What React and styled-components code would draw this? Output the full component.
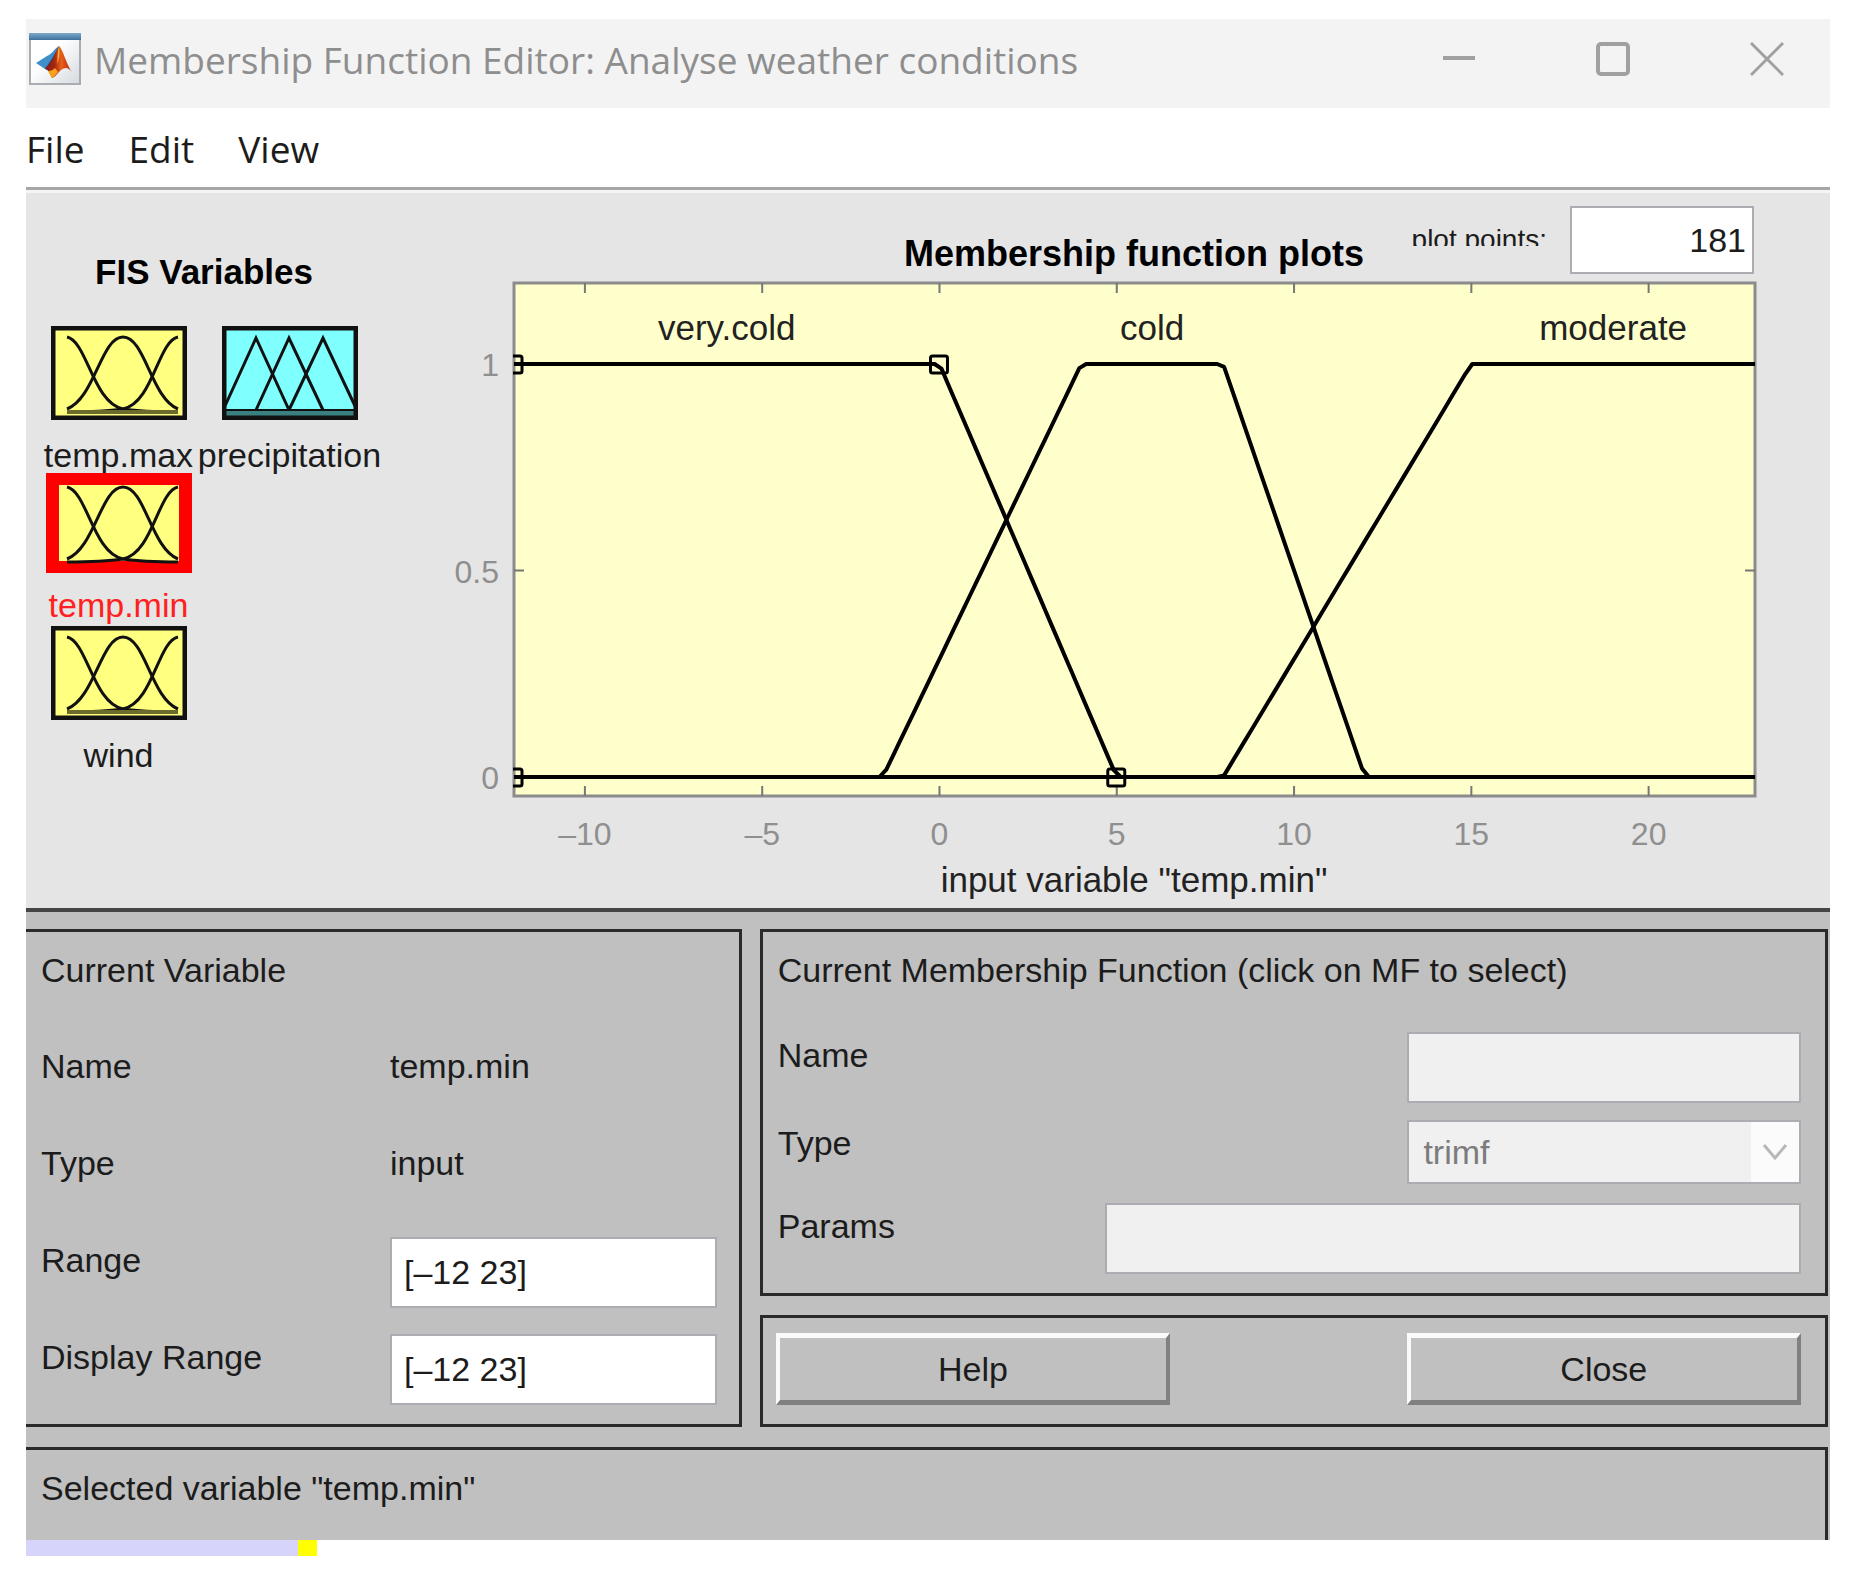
import React, { useState } from 'react'
import styled, { createGlobalStyle } from 'styled-components'

const variables = [
  { name: 'temp.max', kind: 'input' },
  { name: 'precipitation', kind: 'output' },
  { name: 'temp.min', kind: 'input' },
  { name: 'wind', kind: 'input', newRow: true },
]

const functions = [
  { name: 'very.cold', params: [-13, -12, 0, 5], labelAt: -6 },
  { name: 'cold', params: [-1.6, 4, 8, 12], labelAt: 6 },
  { name: 'moderate', params: [8, 15, 24, 25], labelAt: 19 },
]

const handles = [
  [-12, 1],
  [0, 1],
  [-12, 0],
  [5, 0],
]

const xTicks = [-10, -5, 0, 5, 10, 15, 20]
const yTicks = [0, 0.5, 1]

const plot = { left: 74, right: 1315, top: 3, bottom: 516 }
const xScale = (x) => plot.left + ((x + 12) / 35) * (plot.right - plot.left)
const yScale = (y) => 497 - y * 413
const formatTick = (n) => String(n).replace('-', '–')

const trapmf = (x, [a, b, c, d]) =>
  Math.max(0, Math.min((x - a) / (b - a), 1, (d - x) / (d - c)))

const curvePoints = (params, count) =>
  Array.from({ length: count }, (_, i) => {
    const x = -12 + (35 * i) / (count - 1)
    return `${xScale(x).toFixed(1)},${yScale(trapmf(x, params)).toFixed(1)}`
  }).join(' ')

const AppIcon = () => (
  <svg width='52' height='52' viewBox='0 0 52 52' aria-hidden='true'>
    <defs>
      <linearGradient id='paper' x1='0' y1='0' x2='1' y2='1'>
        <stop offset='0.4' stopColor='#ffffff' />
        <stop offset='1' stopColor='#d5d9de' />
      </linearGradient>
      <linearGradient id='bar' x1='0' y1='0' x2='0' y2='1'>
        <stop offset='0' stopColor='#7fa9c9' />
        <stop offset='1' stopColor='#3b709c' />
      </linearGradient>
      <linearGradient id='flame' x1='0' y1='0' x2='1' y2='0'>
        <stop offset='0' stopColor='#8c1a12' />
        <stop offset='0.35' stopColor='#a3260f' />
        <stop offset='0.6' stopColor='#e8601a' />
        <stop offset='1' stopColor='#b5250f' />
      </linearGradient>
    </defs>
    <rect x='1' y='1' width='50' height='50' fill='url(#paper)' stroke='#a9adb1' strokeWidth='2' />
    <rect x='0' y='0' width='52' height='7' fill='url(#bar)' />
    <path d='M7 30 L18 23 C22 22 26 15 30 13 L24 31 L16 36 Z' fill='#3f8fcb' />
    <path d='M16 36 L24 24 L30 13 L26 34 L20 38 Z' fill='#1f4379' />
    <path d='M16 35 C21 33 25 22 30 13 C34 16 37 31 43 39 C38 33 35 35 31 38 C28 41 26 44 23 45 C21 41 20 37 16 35 Z' fill='url(#flame)' />
    <path d='M19 38 C22 38 24 37 26 35 L29 39 C27 41 25 44 23 45 C21 42 20 40 19 38 Z' fill='#f6a21d' />
    <path d='M30 13 C31 18 31 25 28 31 C29 26 28 20 30 13 Z' fill='#fbb034' />
  </svg>
)

const InputThumb = ({ selected }) => (
  <Thumb viewBox={selected ? '-5 -3 146 100' : '0 0 136 94'} $selected={selected} aria-hidden='true'>
    {selected && <rect x='-5' y='-3' width='146' height='100' fill='#ff0000' />}
    <rect
      x={selected ? 8 : 0}
      y={selected ? 9 : 0}
      width={selected ? 120 : 136}
      height={selected ? 76 : 94}
      fill='#ffff80'
    />
    <g fill='none' stroke='#111' strokeWidth='3'>
      <path d='M16 11 C36 15 42 77 72 83 C92 86 108 86 127 86' />
      <path d='M16 83 C44 72 50 11 72 11 C94 11 100 72 127 83' />
      <path d='M127 11 C107 15 102 77 72 83 C52 86 36 86 16 86' />
    </g>
    {!selected && (
      <>
        <path d='M16 86 H127' stroke='#6b6b2c' strokeWidth='4' />
        <rect x='2' y='2' width='132' height='90' fill='none' stroke='#111' strokeWidth='5' />
      </>
    )}
  </Thumb>
)

const OutputThumb = () => (
  <Thumb viewBox='0 0 136 94' aria-hidden='true'>
    <rect width='136' height='94' fill='#80ffff' />
    <rect x='2' y='84' width='132' height='8' fill='#3b8080' />
    <g fill='none' stroke='#111' strokeWidth='3'>
      <path d='M3 80 L34 12 L67 84' />
      <path d='M34 84 L67 12 L101 84' />
      <path d='M67 84 L101 12 L133 80' />
      <path d='M3 84 H133' strokeWidth='2' />
    </g>
    <rect x='2' y='2' width='132' height='90' fill='none' stroke='#111' strokeWidth='5' />
  </Thumb>
)

const MembershipPlot = ({ variable, points }) => (
  <Chart viewBox='0 0 1390 628' role='img' aria-label='Membership function plots'>
    <defs>
      <clipPath id='axes'>
        <rect x={plot.left - 1} y={plot.top} width={plot.right - plot.left + 2} height={plot.bottom - plot.top} />
      </clipPath>
    </defs>
    <rect
      x={plot.left}
      y={plot.top}
      width={plot.right - plot.left}
      height={plot.bottom - plot.top}
      fill='#ffffcc'
      stroke='#8c8c8c'
      strokeWidth='3'
    />
    <g stroke='#777' strokeWidth='2'>
      {xTicks.map((t) => (
        <path key={t} d={`M${xScale(t)} ${plot.top} v10 M${xScale(t)} ${plot.bottom} v-10`} />
      ))}
      {yTicks.map((t) => (
        <path key={t} d={`M${plot.left} ${yScale(t)} h10 M${plot.right} ${yScale(t)} h-10`} />
      ))}
    </g>
    <g clipPath='url(#axes)' fill='none' stroke='#000'>
      {functions.map((mf) => (
        <polyline key={mf.name} points={curvePoints(mf.params, points)} strokeWidth='4' strokeLinejoin='round' />
      ))}
      {handles.map(([x, y]) => (
        <rect key={`${x}:${y}`} x={xScale(x) - 9} y={yScale(y) - 8} width='17' height='17' rx='2' strokeWidth='3' />
      ))}
    </g>
    <g fill='#222' textAnchor='middle' fontSize='35'>
      {functions.map((mf) => (
        <text key={mf.name} x={xScale(mf.labelAt)} y='60'>
          {mf.name}
        </text>
      ))}
      <text x='694' y='612'>{`input variable "${variable}"`}</text>
    </g>
    <g fill='#8f8f8f' fontSize='32'>
      {xTicks.map((t) => (
        <text key={t} x={xScale(t)} y='565' textAnchor='middle'>
          {formatTick(t)}
        </text>
      ))}
      {yTicks.map((t) => (
        <text key={t} x='59' y={yScale(t) + 12} textAnchor='end'>
          {t}
        </text>
      ))}
    </g>
  </Chart>
)

const App = () => {
  const [current, setCurrent] = useState('temp.min')
  const [points, setPoints] = useState('181')
  const [range, setRange] = useState('[–12 23]')
  const [display, setDisplay] = useState('[–12 23]')

  const kind = variables.find((v) => v.name === current).kind
  const sampleCount = Math.max(2, parseInt(points, 10) || 181)

  return (
    <Page>
      <GlobalStyle />
      <TitleBar>
        <AppIcon />
        <Title>Membership Function Editor: Analyse weather conditions</Title>
        <WindowControls>
          <WindowButton type='button' aria-label='Minimize'>
            <svg width='34' height='36' viewBox='0 0 34 36'>
              <path d='M1 17 H33' strokeWidth='4' />
            </svg>
          </WindowButton>
          <WindowButton type='button' aria-label='Maximize'>
            <svg width='34' height='36' viewBox='0 0 34 36'>
              <rect x='2' y='3' width='30' height='30' rx='3' strokeWidth='4' />
            </svg>
          </WindowButton>
          <WindowButton type='button' aria-label='Close window'>
            <svg width='34' height='36' viewBox='0 0 34 36'>
              <path d='M1 2 L33 34 M33 2 L1 34' strokeWidth='3' />
            </svg>
          </WindowButton>
        </WindowControls>
      </TitleBar>
      <MenuBar>
        <MenuItem type='button'>File</MenuItem>
        <MenuItem type='button'>Edit</MenuItem>
        <MenuItem type='button'>View</MenuItem>
      </MenuBar>

      <PlotPanel>
        <VariableList>
          <h2>FIS Variables</h2>
          <VariableGrid>
            {variables.map((v) => (
              <Variable
                key={v.name}
                type='button'
                $newRow={v.newRow}
                $selected={v.name === current}
                onClick={() => setCurrent(v.name)}
              >
                <ThumbSlot>
                  {v.kind === 'input' ? <InputThumb selected={v.name === current} /> : <OutputThumb />}
                </ThumbSlot>
                <VariableName>{v.name}</VariableName>
              </Variable>
            ))}
          </VariableGrid>
        </VariableList>
        <PlotArea>
          <PlotHeader>
            <PlotTitle>Membership function plots</PlotTitle>
            <PointsField>
              <PointsLabel htmlFor='points'>plot points:</PointsLabel>
              <PointsInput id='points' value={points} onChange={(e) => setPoints(e.target.value)} />
            </PointsField>
          </PlotHeader>
          <MembershipPlot variable={current} points={sampleCount} />
        </PlotArea>
      </PlotPanel>

      <Lower>
        <Columns>
          <Panel $open>
            <PanelTitle $space='53px'>Current Variable</PanelTitle>
            <Rows $gap='25px'>
              <Row $cols='349px 1fr'>
                <RowLabel as='span'>Name</RowLabel>
                <RowLabel as='span'>{current}</RowLabel>
              </Row>
              <Row $cols='349px 1fr'>
                <RowLabel as='span'>Type</RowLabel>
                <RowLabel as='span'>{kind}</RowLabel>
              </Row>
              <Row $cols='349px 1fr'>
                <RowLabel htmlFor='range'>Range</RowLabel>
                <TextInput id='range' value={range} onChange={(e) => setRange(e.target.value)} />
              </Row>
              <Row $cols='349px 1fr'>
                <RowLabel htmlFor='display'>Display Range</RowLabel>
                <TextInput id='display' value={display} onChange={(e) => setDisplay(e.target.value)} />
              </Row>
            </Rows>
          </Panel>
          <Stack>
            <Panel>
              <PanelTitle $space='42px'>Current Membership Function (click on MF to select)</PanelTitle>
              <Rows $gap='16px'>
                <Row $cols='8fr 5fr'>
                  <RowLabel htmlFor='mf-name'>Name</RowLabel>
                  <TextInput id='mf-name' disabled />
                </Row>
                <Row $cols='8fr 5fr' $compact>
                  <RowLabel htmlFor='mf-type'>Type</RowLabel>
                  <SelectBox>
                    <Select id='mf-type' disabled defaultValue='trimf'>
                      <option>trimf</option>
                    </Select>
                    <SelectArrow>
                      <svg width='26' height='18' viewBox='0 0 26 18' aria-hidden='true'>
                        <path d='M2 2 L13 15 L24 2' fill='none' stroke='#b8b8b8' strokeWidth='3' />
                      </svg>
                    </SelectArrow>
                  </SelectBox>
                </Row>
                <Row $cols='8fr 17fr'>
                  <RowLabel htmlFor='mf-params'>Params</RowLabel>
                  <TextInput id='mf-params' disabled />
                </Row>
              </Rows>
            </Panel>
            <ButtonPanel>
              <PushButton type='button'>Help</PushButton>
              <span />
              <PushButton type='button'>Close</PushButton>
            </ButtonPanel>
          </Stack>
        </Columns>
        <Status>{`Selected variable "${current}"`}</Status>
      </Lower>
      <Strip />
    </Page>
  )
}

const GlobalStyle = createGlobalStyle`
  * {
    box-sizing: border-box;
  }
  body {
    margin: 0;
    background: #fff;
    font-family: 'Liberation Sans', Arial, sans-serif;
    font-size: 34px;
    line-height: 40px;
    color: #1c1c1c;
  }
  button, input, select {
    font: inherit;
    color: inherit;
  }
  h1, h2 {
    margin: 0;
    font-size: inherit;
  }
`

const Page = styled.main`
  padding: 19px 25px 30px 26px;
`

const TitleBar = styled.header`
  display: flex;
  align-items: center;
  gap: 13px;
  height: 89px;
  padding: 0 46px 10px 3px;
  background: #f3f3f3;
`

const Title = styled.h1`
  flex: 1;
  padding-top: 2px;
  font-family: 'Open Sans', 'Noto Sans', sans-serif;
  font-size: 37px;
  font-weight: 400;
  line-height: 48px;
  white-space: nowrap;
  color: #8e8e8e;
`

const WindowControls = styled.div`
  display: flex;
  gap: 120px;
`

const WindowButton = styled.button`
  display: flex;
  padding: 0;
  border: none;
  background: transparent;
  svg {
    fill: none;
    stroke: #a0a0a0;
  }
`

const MenuBar = styled.nav`
  display: flex;
  align-items: center;
  gap: 44px;
  height: 82px;
  padding-top: 2px;
  border-bottom: 3px solid #a6a6a6;
`

const MenuItem = styled.button`
  padding: 0;
  border: none;
  background: transparent;
  font-family: 'Open Sans', 'Noto Sans', sans-serif;
  font-size: 37px;
  line-height: 48px;
`

const PlotPanel = styled.section`
  display: grid;
  grid-template-columns: 414px 1fr;
  border-top: 3px solid #f4f4f4;
  background: #e5e5e5;
`

const VariableList = styled.div`
  width: 349px;
  padding: 59px 0 0 7px;
  h2 {
    margin-bottom: 31px;
    font-size: 35px;
    text-align: center;
    color: #000;
  }
`

const VariableGrid = styled.div`
  display: grid;
  grid-template-columns: 1fr 1fr;
`

const Variable = styled.button`
  display: flex;
  flex-direction: column;
  align-items: center;
  grid-column-start: ${({ $newRow }) => ($newRow ? 1 : 'auto')};
  min-width: 0;
  padding: 0;
  border: none;
  background: transparent;
  color: ${({ $selected }) => ($selected ? '#ff2020' : '#1c1c1c')};
`

const ThumbSlot = styled.span`
  display: flex;
  align-items: center;
  height: 100px;
`

const Thumb = styled.svg`
  display: block;
  width: ${({ $selected }) => ($selected ? '146px' : '136px')};
  height: ${({ $selected }) => ($selected ? '100px' : '94px')};
`

const VariableName = styled.span`
  padding-top: 14px;
  line-height: 36px;
  white-space: nowrap;
`

const PlotArea = styled.div`
  padding-top: 13px;
`

const PlotHeader = styled.div`
  display: grid;
  grid-template-columns: 1fr auto 1fr;
  align-items: end;
  padding: 0 76px 6px 74px;
`

const PlotTitle = styled.h2`
  grid-column: 2;
  font-size: 36px;
  color: #000;
`

const PointsField = styled.div`
  display: flex;
  justify-content: flex-end;
  align-items: flex-start;
  gap: 23px;
`

/* the label box is shorter than its text and cuts off the lower part */
const PointsLabel = styled.label`
  height: 20px;
  margin-top: 20px;
  overflow: hidden;
  font-size: 28px;
  line-height: 28px;
  white-space: nowrap;
`

const Chart = styled.svg`
  display: block;
  width: 100%;
  font-family: 'Liberation Sans', Arial, sans-serif;
`

const TextInput = styled.input`
  width: 100%;
  min-width: 0;
  height: 71px;
  padding: 0 12px;
  border: 2px solid #abadb3;
  border-radius: 0;
  outline: none;
  background: #fff;
  &:disabled {
    background: #f0f0f0;
  }
`

const PointsInput = styled(TextInput)`
  width: 184px;
  height: 68px;
  padding: 0 6px;
  text-align: right;
`

const Lower = styled.section`
  padding: 17px 2px 0 0;
  border-top: 4px solid #454545;
  background: #c0c0c0;
`

const Columns = styled.div`
  display: grid;
  grid-template-columns: 67fr 100fr;
  gap: 18px;
`

const Stack = styled.div`
  display: flex;
  flex-direction: column;
  gap: 19px;
`

const Panel = styled.section`
  padding: ${({ $open }) => ($open ? '18px 22px 17px 15px' : '18px 24px 18px 15px')};
  border: 3px solid #2a2a2a;
  ${({ $open }) => $open && 'border-left: none;'}
`

const PanelTitle = styled.h2`
  margin-bottom: ${({ $space }) => $space};
  font-weight: 400;
  white-space: nowrap;
`

const Rows = styled.div`
  display: flex;
  flex-direction: column;
  gap: ${({ $gap }) => $gap};
`

const Row = styled.div`
  display: grid;
  grid-template-columns: ${({ $cols }) => $cols};
  align-items: start;
  height: ${({ $compact }) => ($compact ? '67px' : '72px')};
`

const RowLabel = styled.label`
  padding-top: 3px;
  white-space: nowrap;
`

const SelectBox = styled.div`
  display: flex;
  height: 64px;
  border: 2px solid #abadb3;
  background: #f0f0f0;
`

const Select = styled.select`
  flex: 1;
  min-width: 0;
  padding: 0 14px;
  border: none;
  appearance: none;
  background: transparent;
  &:disabled {
    color: #7c7c7c;
    opacity: 1;
  }
`

const SelectArrow = styled.span`
  display: flex;
  align-items: center;
  justify-content: center;
  width: 48px;
  background: #fbfbfb;
`

const ButtonPanel = styled.section`
  display: grid;
  grid-template-columns: 5fr 3fr 5fr;
  padding: 15px 24px 19px 13px;
  border: 3px solid #2a2a2a;
`

const PushButton = styled.button`
  height: 72px;
  padding: 0;
  border-style: solid;
  border-width: 5px 4px;
  border-color: #fafafa #808080 #808080 #fafafa;
  background: #c0c0c0;
`

const Status = styled.footer`
  margin-top: 20px;
  padding: 18px 15px 32px;
  border-top: 3px solid #2a2a2a;
  border-right: 3px solid #2a2a2a;
`

const Strip = styled.div`
  width: 291px;
  height: 16px;
  border-right: 19px solid #ffff00;
  background: #d6d4fb;
`

export default App
